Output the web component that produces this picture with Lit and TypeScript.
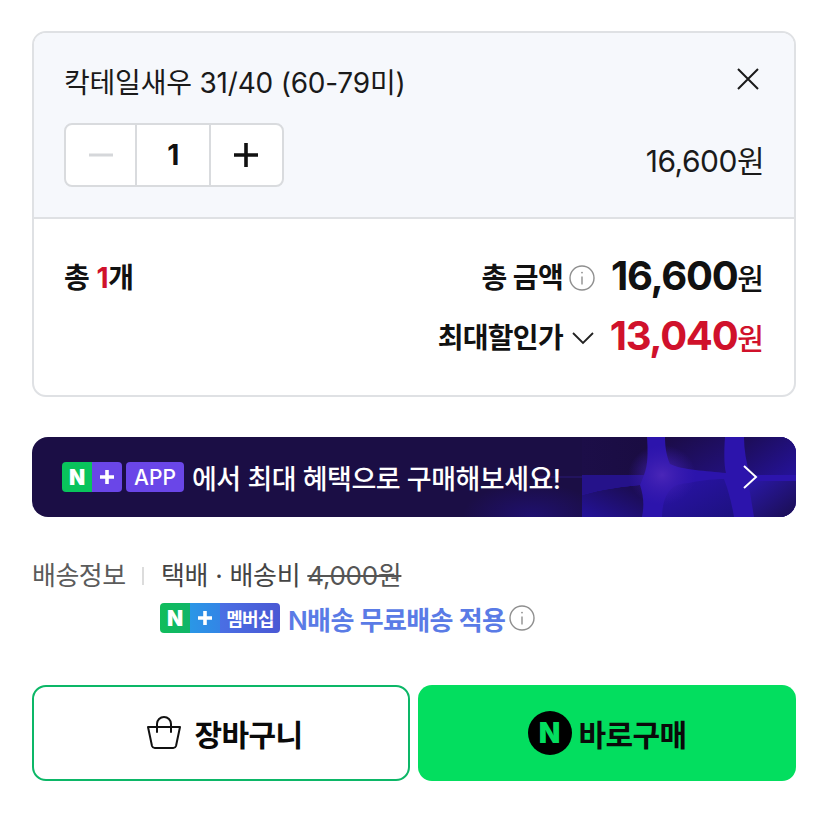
import { LitElement, html, css, svg } from "lit";
import { customElement } from "lit/decorators.js";

const info = html`<svg class="info" viewBox="0 0 26 26" fill="none" stroke="#8f8f8f" stroke-width="1.4"><circle cx="13" cy="13" r="12"/><path d="M13 11.5v8"/><circle cx="13" cy="7.6" r="0.9" fill="#8f8f8f" stroke="none"/></svg>`;

@customElement("app-root")
export class AppRoot extends LitElement {
  static styles = css`
    :host { display: block; width: 828px; height: 835px; background: #fff; box-sizing: border-box; padding: 31px 32px 0; font-family: Inter, "Noto Sans CJK KR", sans-serif; color: #111; letter-spacing: -0.4px; }
    * { box-sizing: border-box; }
    .card { border: 2px solid #dfe1e4; border-radius: 14px; overflow: hidden; height: 366px; }
    .top { background: #f6f8fc; height: 186px; border-bottom: 2px solid #dfe1e4; padding: 30px 30px 0; position: relative; }
    .name { font-size: 28px; line-height: 40px; height: 40px; color: #1a1a1a; letter-spacing: -0.2px; }
    .close { position: absolute; right: 34px; top: 34px; width: 24px; height: 24px; display: block; }
    .qtyrow { display: flex; justify-content: space-between; align-items: flex-end; margin-top: 20px; }
    .qty { display: flex; width: 220px; height: 64px; border: 2px solid #d9dbde; border-radius: 8px; background: #fff; }
    .qty > div { display: flex; align-items: center; justify-content: center; }
    .qb1 { width: 69px; }
    .qb2 { width: 70px; }
    .qn { width: 76px; border-left: 2px solid #d9dbde; border-right: 2px solid #d9dbde; font-size: 28px; font-weight: 700; }
    .qty svg { width: 26px; height: 26px; display: block; }
    .unit { font-size: 30px; line-height: 40px; height: 46px; color: #1a1a1a; letter-spacing: -0.5px; white-space: nowrap; }
    .bottom { padding: 36px 30px 0; display: flex; justify-content: space-between; }
    .count { font-size: 28px; font-weight: 600; line-height: 42px; margin-top: 2px; letter-spacing: -0.2px; }
    .count b { color: #d0112b; font-weight: 700; }
    .sums { display: flex; flex-direction: column; align-items: flex-end; gap: 14px; }
    .sum { display: flex; align-items: center; height: 46px; }
    .sum .lab { font-size: 28px; font-weight: 600; line-height: 46px; letter-spacing: -0.7px; }
    .sum .info { width: 26px; height: 26px; margin-left: 6px; }
    .chev { width: 24px; height: 14px; margin-left: 8px; }
    .amt { width: 153px; margin-left: 16px; display: flex; justify-content: flex-end; align-items: baseline; white-space: nowrap; font-size: 40px; font-weight: 700; line-height: 46px; letter-spacing: -1.3px; }
    .amt span { font-size: 29px; font-weight: 500; letter-spacing: 0; }
    .amt.red { color: #d0112b; }
    .banner { position: relative; margin-top: 40px; height: 80px; border-radius: 16px; overflow: hidden; background: #1b0e45; display: flex; align-items: center; padding-left: 30px; color: #fff; }
    .banner .bg { position: absolute; inset: 0; width: 100%; height: 100%; }
    .banner > div { position: relative; }
    .npl { display: flex; height: 30px; border-radius: 4px; overflow: hidden; }
    .n { width: 30px; height: 30px; background: #09c45c; color: #fff; font-weight: 900; font-size: 21px; display: flex; align-items: center; justify-content: center; letter-spacing: 0; }
    .p { width: 30px; height: 30px; background: #6a46e8; display: flex; align-items: center; justify-content: center; }
    .p svg { width: 18px; height: 18px; }
    .app { margin-left: 4px; width: 58px; height: 30px; border-radius: 4px; background: #6a46e8; font-size: 21px; font-weight: 500; display: flex; align-items: center; justify-content: center; letter-spacing: 0; }
    .btxt { margin-left: 8px; font-size: 27px; font-weight: 500; letter-spacing: -0.5px; white-space: nowrap; }
    .chevr { position: absolute; left: 709px; top: 27px; width: 18px; height: 26px; }
    .ship { margin-top: 39px; display: flex; font-size: 26px; line-height: 40px; color: #555; height: 40px; align-items: center; }
    .ship .l { width: 110px; letter-spacing: -0.5px; color: #5b5b5b; }
    .sep { width: 2px; height: 18px; background: #dcdcdc; margin-right: 17px; }
    .ship .v { color: #444; letter-spacing: -0.3px; }
    .ship s { color: #555; }
    .mem { margin: 2px 0 0 128px; display: flex; align-items: center; height: 40px; }
    .badge { display: flex; width: 120px; height: 30px; border-radius: 4px; overflow: hidden; background: linear-gradient(90deg, #10bd5c 0, #10b568 30px, #2a97e6 30px, #3385e6 60px, #4a6fe4 60px, #4a58d4 100%); color: #fff; align-items: center; }
    .badge .bn { width: 30px; text-align: center; font-size: 21px; font-weight: 900; letter-spacing: 0; }
    .badge .bp { width: 30px; display: flex; justify-content: center; }
    .badge .bp svg { width: 18px; height: 18px; display: block; }
    .badge .bt { width: 60px; text-align: center; font-size: 18px; font-weight: 700; letter-spacing: -0.8px; white-space: nowrap; }
    .memt { margin-left: 8px; font-size: 26px; font-weight: 600; color: #5a7be6; white-space: nowrap; letter-spacing: -0.62px; }
    .mem .info { width: 26px; height: 26px; margin-left: 4px; }
    .btns { margin-top: 47px; display: grid; grid-template-columns: 1fr 1fr; gap: 8px; }
    .btn { height: 96px; border-radius: 14px; display: flex; align-items: center; justify-content: center; font-size: 30px; font-weight: 700; color: #0a0a0a; letter-spacing: -0.6px; }
    .cart { border: 2px solid #0cb767; background: #fff; padding-left: 6px; }
    .cart svg { width: 36px; height: 36px; margin-right: 13px; }
    .buy { background: #03de5f; }
    .nc { width: 44px; height: 44px; border-radius: 50%; background: #000; color: #03de5f; font-weight: 900; font-size: 28px; display: flex; align-items: center; justify-content: center; margin-right: 7px; letter-spacing: 0; }
  `;

  plus() {
    return html`<svg viewBox="0 0 18 18"><path d="M2 9h14M9 2v14" stroke="#fff" stroke-width="3.6" fill="none"/></svg>`;
  }

  render() {
    return html`
      <div class="card">
        <div class="top">
          <div class="name">칵테일새우 31/40 (60-79미)</div>
          <svg class="close" viewBox="0 0 24 24" fill="none" stroke="#1a1a1a" stroke-width="2"><path d="M2 2l20 20M22 2L2 22"/></svg>
          <div class="qtyrow">
            <div class="qty">
              <div class="qb1"><svg viewBox="0 0 26 26"><path d="M1 13h24" stroke="#d5d7da" stroke-width="3"/></svg></div>
              <div class="qn">1</div>
              <div class="qb2"><svg viewBox="0 0 26 26"><path d="M1 13h24M13 1v24" stroke="#111" stroke-width="3.6"/></svg></div>
            </div>
            <div class="unit">16,600원</div>
          </div>
        </div>
        <div class="bottom">
          <div class="count">총 <b>1</b>개</div>
          <div class="sums">
            <div class="sum"><span class="lab">총 금액</span>${info}<div class="amt">16,600<span>원</span></div></div>
            <div class="sum"><span class="lab">최대할인가</span><svg class="chev" viewBox="0 0 24 14" fill="none" stroke="#222" stroke-width="1.8"><path d="M2 2l10 10L22 2"/></svg><div class="amt red">13,040<span>원</span></div></div>
          </div>
        </div>
      </div>
      <div class="banner">
        <svg class="bg" viewBox="0 0 764 80" preserveAspectRatio="none">
          ${svg`<defs>
            <linearGradient id="ul" x1="0" x2="1"><stop offset="0" stop-color="#1c0e48"/><stop offset="1" stop-color="#1a0c42"/></linearGradient>
            <linearGradient id="ll" x1="0" x2="1" y1="1" y2="0"><stop offset="0" stop-color="#24129a"/><stop offset="1" stop-color="#1a0c48"/></linearGradient>
            <linearGradient id="um" x1="0" x2="1" y1="0" y2="1"><stop offset="0" stop-color="#1b0c45"/><stop offset="1" stop-color="#22107a"/></linearGradient>
            <linearGradient id="lm" x1="0" x2="1" y1="0" y2="1"><stop offset="0" stop-color="#2a13a8"/><stop offset="1" stop-color="#1d1180"/></linearGradient>
            <linearGradient id="ur" x1="0" x2="1" y1="0" y2="1"><stop offset="0" stop-color="#1c0d55"/><stop offset="1" stop-color="#25129a"/></linearGradient>
            <linearGradient id="lr" x1="0" x2="1" y1="0" y2="1"><stop offset="0" stop-color="#2a18a8"/><stop offset="1" stop-color="#1a0e50"/></linearGradient>
            <radialGradient id="cr"><stop offset="0" stop-color="#4a26b8"/><stop offset="1" stop-color="#3a1cb0" stop-opacity="0"/></radialGradient>
            <radialGradient id="lf"><stop offset="0" stop-color="#20107a" stop-opacity=".8"/><stop offset="1" stop-color="#20107a" stop-opacity="0"/></radialGradient>
          </defs>
          <ellipse cx="500" cy="80" rx="70" ry="34" fill="url(#lf)"/>
          <rect x="550" width="214" height="80" fill="#2c14ac"/>
          <path d="M550 0H615C616 15 616 28 612 38H550Z" fill="url(#ul)"/>
          <path d="M550 80V58C570 52 595 49 608 48C612 60 612 70 610 80Z" fill="url(#ll)"/>
          <path d="M550 38H612L608 48C595 49 570 52 550 58Z" fill="#25128a"/>
          <path d="M633 0H693C692 14 692 28 694 36C675 34 650 33 638 27C634 18 633 8 633 0Z" fill="url(#um)"/>
          <path d="M630 80C630 65 635 52 645 48C665 44 680 42 692 42C697 55 700 68 702 80Z" fill="url(#lm)"/>
          <path d="M712 0H764V38H718C714 25 712 12 712 0Z" fill="url(#ur)"/>
          <path d="M716 44H764V80H722C720 68 718 55 716 44Z" fill="url(#lr)"/>
          <ellipse cx="630" cy="38" rx="34" ry="30" fill="url(#cr)"/>
          <path d="M505 40H550" stroke="#2a1878" stroke-width="1"/>`}
        </svg>
        <div class="npl"><div class="n">N</div><div class="p">${this.plus()}</div></div>
        <div class="app">APP</div>
        <div class="btxt">에서 최대 혜택으로 구매해보세요!</div>
        <svg class="chevr" viewBox="0 0 18 26" fill="none" stroke="#fff" stroke-width="2"><path d="M3 2l12 11L3 24"/></svg>
      </div>
      <div class="ship">
        <div class="l">배송정보</div>
        <div class="sep"></div>
        <div class="v">택배 · 배송비 <s>4,000원</s></div>
      </div>
      <div class="mem">
        <div class="badge"><div class="bn">N</div><div class="bp">${this.plus()}</div><div class="bt">멤버십</div></div>
        <div class="memt">N배송 무료배송 적용</div>
        ${info}
      </div>
      <div class="btns">
        <div class="btn cart">
          <svg viewBox="0 0 36 36" fill="none" stroke="#111" stroke-width="2" stroke-linejoin="round" stroke-linecap="round"><path d="M2 12h32l-4 19a3 3 0 0 1-3 2H9a3 3 0 0 1-3-2z"/><path d="M11 17V9a7 7 0 0 1 14 0v8"/></svg>
          장바구니
        </div>
        <div class="btn buy"><div class="nc">N</div>바로구매</div>
      </div>
    `;
  }
}
